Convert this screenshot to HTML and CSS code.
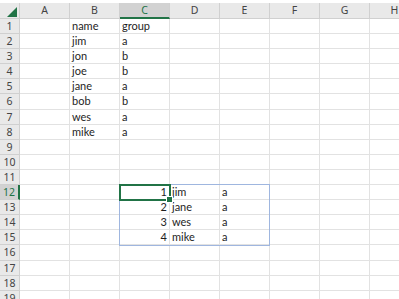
FILE: index.html
```html
<!DOCTYPE html>
<html lang="en">
<head>
    <meta charset="UTF-8">
    <meta name="viewport" content="width=device-width, initial-scale=1.0">
    <title>Sheet1</title>
    <link rel="stylesheet" href="styles.css">
</head>
<body>
    <div class="sheet">
        <div class="grid" id="grid">
            <div class="corner">
                <svg width="20" height="16" viewBox="0 0 20 16">
                    <polygon points="7,14 17,14 17,4" fill="#217346"/>
                </svg>
            </div>
        </div>
        <div class="range"></div>
        <div class="active-cell"><span class="fill-handle"></span></div>
    </div>

    <script>
        const columns = ['A', 'B', 'C', 'D', 'E', 'F', 'G', 'H'];
        const rowCount = 19;

        // valores das células, por linha
        const data = {
            1: { B: 'name', C: 'group' },
            2: { B: 'jim', C: 'a' },
            3: { B: 'jon', C: 'b' },
            4: { B: 'joe', C: 'b' },
            5: { B: 'jane', C: 'a' },
            6: { B: 'bob', C: 'b' },
            7: { B: 'wes', C: 'a' },
            8: { B: 'mike', C: 'a' },
            12: { C: 1, D: 'jim', E: 'a' },
            13: { C: 2, D: 'jane', E: 'a' },
            14: { C: 3, D: 'wes', E: 'a' },
            15: { C: 4, D: 'mike', E: 'a' }
        };

        const grid = document.getElementById('grid');

        columns.forEach(col => {
            const head = document.createElement('div');
            head.className = 'col-head' + (col === 'C' ? ' selected' : '');
            head.textContent = col;
            grid.appendChild(head);
        });

        for (let r = 1; r <= rowCount; r++) {
            const head = document.createElement('div');
            head.className = 'row-head' + (r === 12 ? ' selected' : '');
            head.textContent = r;
            grid.appendChild(head);

            columns.forEach(col => {
                const cell = document.createElement('div');
                cell.className = 'cell';
                const value = data[r] && data[r][col];
                if (value !== undefined) {
                    cell.textContent = value;
                    if (typeof value === 'number') cell.classList.add('number');
                }
                grid.appendChild(cell);
            });
        }
    </script>
</body>
</html>
```

FILE: styles.css
```css
:root {
    --grid-line: #e2e2e2;
    --head-bg: #e9e9e9;
    --head-line: #d0d0d0;
    --head-selected: #d2d2d2;
    --excel-green: #217346;
    --range-blue: #9fb6df;
}

body {
    margin: 0;
    padding-top: 3px;
    background: white;
    font-family: Lato, 'Liberation Sans', sans-serif;
    overflow: hidden;
}

.sheet {
    position: relative;
}

.grid {
    display: grid;
    grid-template-columns: 20px repeat(8, 50px);
    grid-template-rows: 16px repeat(19, 15.1px);
}

.corner,
.col-head,
.row-head {
    background: var(--head-bg);
    border-right: 1px solid var(--head-line);
    border-bottom: 1px solid var(--head-line);
    box-sizing: border-box;
    color: #444;
    font-family: 'Noto Sans', 'Open Sans', sans-serif;
    font-size: 10.5px;
}

.corner svg {
    display: block;
}

.col-head {
    text-align: center;
    line-height: 15px;
}

.row-head {
    text-align: center;
    line-height: 14px;
}

.col-head.selected {
    background: var(--head-selected);
    border-bottom: 2px solid var(--excel-green);
    color: var(--excel-green);
}

.row-head.selected {
    background: var(--head-selected);
    border-right: 2px solid var(--excel-green);
    color: var(--excel-green);
}

.cell {
    border-right: 1px solid var(--grid-line);
    border-bottom: 1px solid var(--grid-line);
    box-sizing: border-box;
    padding: 0 2px;
    font-size: 11px;
    line-height: 14px;
    color: #1e1e1e;
    white-space: nowrap;
}

.cell.number {
    text-align: right;
}

.range {
    position: absolute;
    left: 119px;
    top: 181px;
    width: 151px;
    height: 62px;
    border: 1px solid var(--range-blue);
    box-sizing: border-box;
}

.active-cell {
    position: absolute;
    left: 119px;
    top: 181px;
    width: 52px;
    height: 17px;
    border: 2px solid var(--excel-green);
    box-sizing: border-box;
}

.fill-handle {
    position: absolute;
    right: -4px;
    bottom: -4px;
    width: 5px;
    height: 5px;
    background: var(--excel-green);
    border: 1px solid white;
}
```
